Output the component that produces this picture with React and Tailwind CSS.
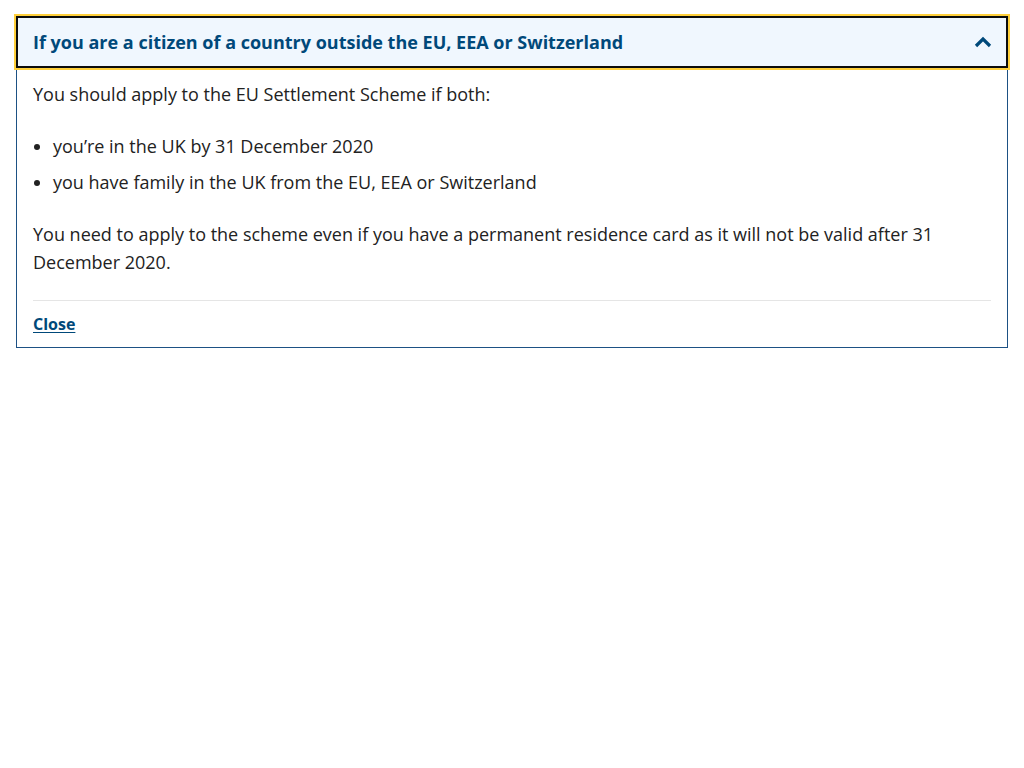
import React, { useState } from 'react';

function App() {
  const [open, setOpen] = useState(true);

  return (
    <div className="min-h-screen bg-white p-4 text-[#222222]" style={{ fontFamily: '"Open Sans", "Noto Sans", sans-serif' }}>
      <div className="border border-[#1d5184]">
        {/* Header */}
        <button
          onClick={() => setOpen(!open)}
          className="-m-px flex h-[52px] w-[calc(100%+2px)] items-center justify-between border-2 border-[#0b0c0c] bg-[#f0f7fe] pl-[15px] pr-[14px] text-left outline-2 outline-[#ffd03b]"
        >
          <span className="text-[18px] font-bold leading-7 text-[#00497a]">
            If you are a citizen of a country outside the EU, EEA or Switzerland
          </span>
          <svg width="18" height="12" viewBox="0 0 18 12" className="text-[#00497a]">
            <path d="M2 10 L9 3 L16 10" fill="none" stroke="currentColor" strokeWidth="3.2" />
          </svg>
        </button>

        {open && (
          <div className="px-4 pt-[13px] pb-[11px] text-[18px] leading-7">
            <p>You should apply to the EU Settlement Scheme if both:</p>
            <ul className="mt-6 list-disc space-y-2 pl-5">
              <li>you’re in the UK by 31 December 2020</li>
              <li>you have family in the UK from the EU, EEA or Switzerland</li>
            </ul>
            <p className="mt-6">
              You need to apply to the scheme even if you have a permanent residence card as it will not be valid after 31
              December 2020.
            </p>
            <div className="mt-6 border-t border-[#e5e5e5] pt-[11px]">
              <button
                onClick={() => setOpen(false)}
                className="block text-[16px] font-bold leading-6 text-[#00497a] underline underline-offset-2"
              >
                Close
              </button>
            </div>
          </div>
        )}
      </div>
    </div>
  );
}

export default App;
